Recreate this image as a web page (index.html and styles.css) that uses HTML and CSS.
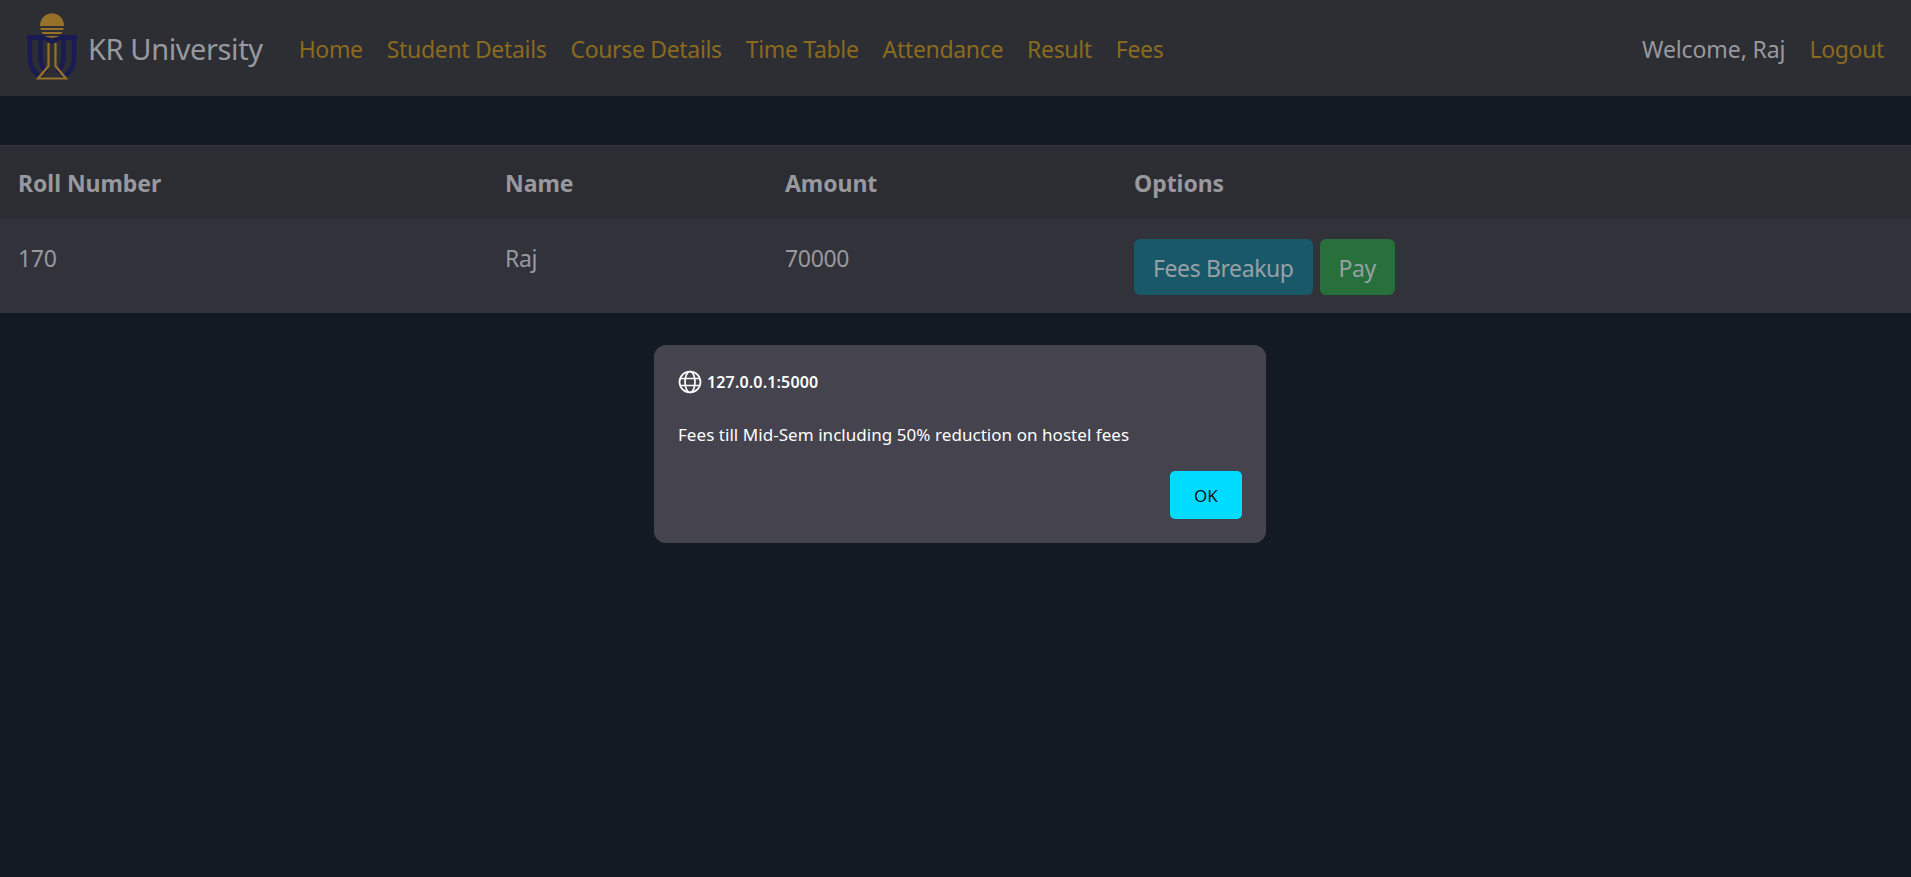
FILE: index.html
```html
<!DOCTYPE html>
<html lang="en">

<head>
    <meta charset="UTF-8">
    <meta name="viewport" content="width=device-width, initial-scale=1.0">
    <title>Fees</title>
    <link rel="stylesheet" href="styles.css">
</head>

<body>
    <nav class="navbar">
        <a class="brand" href="#">
            <svg class="logo" width="52" height="72" viewBox="0 0 52 72">
                <g fill="none" stroke="#1a1b52" stroke-width="4.500">
                    <path d="M3 26 V48 Q3 58 15 66"/>
                    <path d="M13.500 28 V47 Q13.500 54 20 60"/>
                    <path d="M47 26 V48 Q47 58 35 66"/>
                    <path d="M36.500 28 V47 Q36.500 54 30 60"/>
                </g>
                <path d="M0 23 H18 L25 27 L32 23 H50 V28 H33 L25 32 L17 28 H0 Z" fill="#1a1b52"/>
                <path d="M21.500 31 V54 L11 66.500 H39 L28.500 54 V31" fill="none" stroke="#957228" stroke-width="2.200"/>
                <path d="M13.200 11 a12 12 0 0 1 23.600 0 L37 14 H13 Z" fill="#957228"/>
                <path d="M13.300 16 H36.700 L36.100 18 H13.900 Z M14.600 20 H35.400 L34.200 22 H15.800 Z M17.500 24 H32.500 Q29 25.800 25 25.800 Q21 25.800 17.500 24 Z" fill="#957228"/>
            </svg>
            <span>KR University</span>
        </a>
        <ul class="nav-links">
            <li><a href="#">Home</a></li>
            <li><a href="#">Student Details</a></li>
            <li><a href="#">Course Details</a></li>
            <li><a href="#">Time Table</a></li>
            <li><a href="#">Attendance</a></li>
            <li><a href="#">Result</a></li>
            <li><a href="#">Fees</a></li>
        </ul>
        <div class="nav-right">
            <span class="welcome">Welcome, Raj</span>
            <a href="#">Logout</a>
        </div>
    </nav>

    <table class="fees-table">
        <colgroup>
            <col class="col-roll">
            <col class="col-name">
            <col class="col-amount">
            <col>
        </colgroup>
        <thead>
            <tr>
                <th>Roll Number</th>
                <th>Name</th>
                <th>Amount</th>
                <th>Options</th>
            </tr>
        </thead>
        <tbody>
            <tr>
                <td>170</td>
                <td>Raj</td>
                <td>70000</td>
                <td>
                    <div class="options">
                        <button class="btn btn-info">Fees Breakup</button>
                        <button class="btn btn-success">Pay</button>
                    </div>
                </td>
            </tr>
        </tbody>
    </table>

    <div class="alert-box">
        <div class="alert-origin">
            <svg width="24" height="24" viewBox="0 0 24 24" fill="none" stroke="#fff" stroke-width="1.700">
                <circle cx="12" cy="12" r="10.500"/>
                <ellipse cx="12" cy="12" rx="5" ry="10.500"/>
                <path d="M2.500 8.500 H21.500 M2.500 15.500 H21.500"/>
            </svg>
            <span>127.0.0.1:5000</span>
        </div>
        <p class="alert-message">Fees till Mid-Sem including 50% reduction on hostel fees</p>
        <div class="alert-actions">
            <button class="alert-ok">OK</button>
        </div>
    </div>
</body>

</html>
```

FILE: styles.css
```css
body {
    font-family: "Noto Sans", "Open Sans", sans-serif;
    font-size: 23px;
    letter-spacing: -0.33px;
    margin: 0;
    height: 877px;
    overflow: hidden;
    background-color: #141a24;
    color: #98999e;
}

a {
    color: #8a6a1e;
    text-decoration: none;
}

.navbar {
    display: flex;
    align-items: center;
    height: 96px;
    padding: 0 27px;
    box-sizing: border-box;
    background-color: #2c2e33;
}

.brand {
    display: flex;
    align-items: center;
    gap: 9px;
    color: #98999e;
    font-size: 29px;
    letter-spacing: -0.4px;
}

.logo {
    display: block;
}

.nav-links {
    display: flex;
    gap: 24px;
    list-style: none;
    margin: 0 0 0 36px;
    padding: 1px 0 0;
}

.nav-right {
    display: flex;
    gap: 24px;
    margin-left: auto;
    padding-top: 1px;
}

.welcome {
    letter-spacing: -0.1px;
}

.fees-table {
    width: 100%;
    margin-top: 49px;
    border-collapse: collapse;
    table-layout: fixed;
}

.col-roll {
    width: 487px;
}

.col-name {
    width: 280px;
}

.col-amount {
    width: 349px;
}

.fees-table th {
    height: 73px;
    padding: 2px 18px 0;
    box-sizing: border-box;
    text-align: left;
    font-weight: 700;
    letter-spacing: -0.05px;
    background-color: #2c2d32;
    border-top: 1px solid #35363c;
}

.fees-table td {
    height: 94px;
    padding: 20px 18px 0;
    box-sizing: border-box;
    vertical-align: top;
    line-height: 39px;
    background-color: #32333a;
}

.options {
    display: flex;
    gap: 7px;
}

.btn {
    height: 56px;
    padding: 3px 18px 0;
    border: 1px solid transparent;
    border-radius: 6px;
    font-family: inherit;
    font-size: 23px;
    letter-spacing: -0.4px;
    color: #98a0a5;
    cursor: pointer;
}

.btn-info {
    background-color: #195868;
}

.btn-success {
    background-color: #27703c;
}

.alert-box {
    position: absolute;
    top: 345px;
    left: 654px;
    width: 612px;
    height: 198px;
    padding: 25px 24px 24px;
    box-sizing: border-box;
    border-radius: 12px;
    background-color: #44434e;
    color: #fff;
    font-size: 17px;
    letter-spacing: 0.05px;
}

.alert-origin {
    display: flex;
    align-items: center;
    gap: 5px;
    font-size: 16px;
    font-weight: 600;
    letter-spacing: 0.15px;
}

.alert-message {
    margin: 29px 0 0;
}

.alert-actions {
    display: flex;
    justify-content: flex-end;
    margin-top: 25px;
}

.alert-ok {
    width: 72px;
    height: 48px;
    border: none;
    border-radius: 5px;
    background-color: #00dcff;
    color: #10131a;
    font-family: inherit;
    font-size: 17px;
}
```
